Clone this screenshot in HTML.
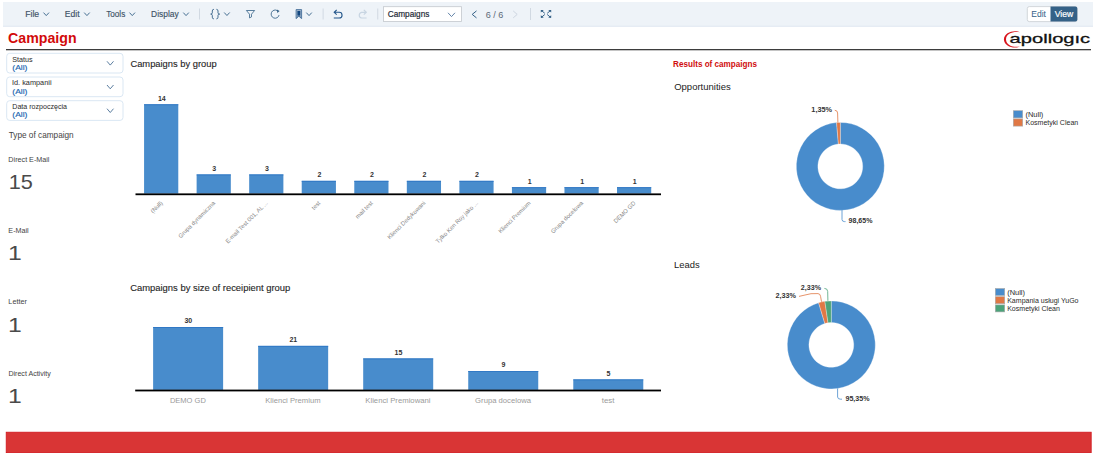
<!DOCTYPE html><html><head><meta charset="utf-8"><style>html,body{margin:0;padding:0;background:#fff;overflow:hidden;width:1100px;height:456px}svg{display:block;font-family:"Liberation Sans",sans-serif}</style></head><body>
<svg width="1100" height="456" viewBox="0 0 1100 456">
<rect x="3" y="2" width="1090" height="24.6" fill="#eef3f8"/>
<rect x="3" y="25.8" width="1090" height="0.8" fill="#dde5ee"/>
<text x="25.18" y="17" font-size="9" fill="#3d5266" font-weight="400" textLength="14.01" lengthAdjust="spacingAndGlyphs" stroke="#3d5266" stroke-width="0.15">File</text>
<polyline points="43.5,12.6 46.25,15.6 49.0,12.6" fill="none" stroke="#346187" stroke-width="0.9"/>
<text x="64.78" y="17" font-size="9" fill="#3d5266" font-weight="400" textLength="14.83" lengthAdjust="spacingAndGlyphs" stroke="#3d5266" stroke-width="0.15">Edit</text>
<polyline points="84.2,12.6 86.95,15.6 89.7,12.6" fill="none" stroke="#346187" stroke-width="0.9"/>
<text x="106.17" y="17" font-size="9" fill="#3d5266" font-weight="400" textLength="19.06" lengthAdjust="spacingAndGlyphs" stroke="#3d5266" stroke-width="0.15">Tools</text>
<polyline points="129.5,12.6 132.25,15.6 135.0,12.6" fill="none" stroke="#346187" stroke-width="0.9"/>
<text x="151.10" y="17" font-size="9" fill="#3d5266" font-weight="400" textLength="27.61" lengthAdjust="spacingAndGlyphs" stroke="#3d5266" stroke-width="0.15">Display</text>
<polyline points="183.3,12.6 186.05,15.6 188.8,12.6" fill="none" stroke="#346187" stroke-width="0.9"/>
<rect x="199.2" y="8.5" width="0.8" height="11" fill="#cad3dd"/>
<path d="M213.9,9.3 Q212.2,9.4 212.3,11 L212.3,12.9 Q212.3,14 210.7,14.1 Q212.3,14.2 212.3,15.3 L212.3,17.2 Q212.2,18.8 213.9,18.9" fill="none" stroke="#346187" stroke-width="0.9"/>
<path d="M216.4,9.3 Q218.1,9.4 218,11 L218,12.9 Q218,14 219.7,14.1 Q218,14.2 218,15.3 L218,17.2 Q218.1,18.8 216.4,18.9" fill="none" stroke="#346187" stroke-width="0.9"/>
<polyline points="224.2,12.5 226.95,15.5 229.7,12.5" fill="none" stroke="#346187" stroke-width="0.9"/>
<path d="M246.4,10.5 L254.6,10.5 L251.5,14.2 L251.5,16.9 L249.5,17.9 L249.5,14.2 Z" fill="none" stroke="#346187" stroke-width="0.8" stroke-linejoin="round"/>
<path d="M277.2,10.6 A4,4.1 0 1 0 279.05,15.1" fill="none" stroke="#346187" stroke-width="0.85"/>
<path d="M276.9,9.4 L279.6,11.1 L277.3,12.9 Z" fill="#346187"/>
<path d="M296.1,9.6 L301.6,9.6 L301.6,18.6 L298.85,16.2 L296.1,18.6 Z" fill="#9fb4ca" stroke="#3f6a96" stroke-width="0.85"/>
<rect x="297.4" y="11" width="2.9" height="4.6" fill="#124780"/>
<path d="M296.6,17.6 L298.85,15.6 L301.1,17.6" fill="none" stroke="#3f6a96" stroke-width="0.7"/>
<polyline points="306.3,12.6 309.05,15.6 311.8,12.6" fill="none" stroke="#346187" stroke-width="0.9"/>
<rect x="322.7" y="8.5" width="0.8" height="11" fill="#cad3dd"/>
<path d="M336.7,9.9 L334.2,12.3 L336.7,14.6 M334.3,12.3 L339.2,12.3 A2.85,2.85 0 0 1 339.2,18 L333.8,18" fill="none" stroke="#23568a" stroke-width="1.1"/>
<path d="M363.8,9.9 L366.3,12.3 L363.8,14.6 M366.2,12.3 L361.6,12.3 A2.9,2.9 0 0 0 361.6,18 L366.6,18" fill="none" stroke="#c8d5e2" stroke-width="1.2"/>
<rect x="377.4" y="8.5" width="0.8" height="11" fill="#cad3dd"/>
<rect x="383.5" y="6.7" width="78" height="14.8" fill="#fff" stroke="#c2c7cc" stroke-width="0.8"/>
<text x="387.72" y="17.3" font-size="8.6" fill="#1f2b38" font-weight="400" textLength="41.61" lengthAdjust="spacingAndGlyphs" stroke="#1f2b38" stroke-width="0.2">Campaigns</text>
<polyline points="448,12.8 451.5,16.6 455,12.8" fill="none" stroke="#5477a0" stroke-width="0.9"/>
<polyline points="476.5,10.9 472.2,14.4 476.5,17.9" fill="none" stroke="#346187" stroke-width="1"/>
<text x="485.75" y="17.5" font-size="8.3" fill="#5d6a77" font-weight="400" textLength="17.68" lengthAdjust="spacingAndGlyphs" >6 / 6</text>
<polyline points="513.2,10.9 517.2,14.4 513.2,17.9" fill="none" stroke="#c9d3de" stroke-width="0.9"/>
<rect x="530" y="8" width="0.8" height="12" fill="#cad3dd"/>
<path d="M541.2,10.3 L544.8,13.3 M541.2,17.5 L544.8,14.5 M550.8,10.3 L547.2,13.3 M550.8,17.5 L547.2,14.5" stroke="#346187" stroke-width="1"/>
<path d="M540.8,10 L543.8,10 L540.8,12.6 Z M540.8,17.8 L543.8,17.8 L540.8,15.2 Z M551.2,10 L548.2,10 L551.2,12.6 Z M551.2,17.8 L548.2,17.8 L551.2,15.2 Z" fill="#346187"/>
<rect x="1027.3" y="6.6" width="50" height="15" rx="2" fill="#fff" stroke="#c8cdd2" stroke-width="0.8"/>
<path d="M1050.5,6.6 L1075.3,6.6 A2,2 0 0 1 1077.3,8.6 L1077.3,19.6 A2,2 0 0 1 1075.3,21.6 L1050.5,21.6 Z" fill="#346187"/>
<text x="1031.29" y="17.4" font-size="9" fill="#346187" font-weight="400" textLength="14.72" lengthAdjust="spacingAndGlyphs" >Edit</text>
<text x="1054.80" y="17.4" font-size="9" fill="#ffffff" font-weight="400" textLength="18.45" lengthAdjust="spacingAndGlyphs" stroke="#fff" stroke-width="0.2">View</text>
<text x="8.09" y="43.2" font-size="14" fill="#d20a0a" font-weight="700" textLength="68.54" lengthAdjust="spacingAndGlyphs" >Campaign</text>
<path d="M1019.8,32.3 C1014,29.6 1004.2,32.5 1003.9,39.4 C1004.2,46.3 1014,49.2 1019.8,46.5 C1013.5,47.6 1006.2,45.5 1006,39.4 C1006.2,33.3 1013.5,31.2 1019.8,32.3 Z" fill="#d8141c"/>
<text x="1009.64" y="43.3" font-size="13.3" fill="#111" font-weight="400" textLength="80.58" lengthAdjust="spacingAndGlyphs" stroke="#111" stroke-width="0.3">apollogıc</text>
<rect x="6" y="49" width="1085" height="1.3" fill="#3d3d3d"/>
<rect x="6.7" y="53.3" width="116.3" height="19.7" rx="3" fill="#fff" stroke="#d6e4f2" stroke-width="0.9"/>
<text x="12.29" y="61.5" font-size="7" fill="#2a2a2a" font-weight="400" textLength="20.41" lengthAdjust="spacingAndGlyphs" >Status</text>
<text x="12.32" y="69.9" font-size="7.4" fill="#2066b0" font-weight="400" textLength="15.14" lengthAdjust="spacingAndGlyphs" stroke="#2066b0" stroke-width="0.15">(All)</text>
<polyline points="107,61.3 110.25,65.1 113.5,61.3" fill="none" stroke="#4a6f95" stroke-width="0.9"/>
<rect x="6.7" y="77.0" width="116.3" height="19.7" rx="3" fill="#fff" stroke="#d6e4f2" stroke-width="0.9"/>
<text x="12.02" y="85.2" font-size="7" fill="#2a2a2a" font-weight="400" textLength="39.50" lengthAdjust="spacingAndGlyphs" >Id. kampanii</text>
<text x="12.32" y="93.6" font-size="7.4" fill="#2066b0" font-weight="400" textLength="15.14" lengthAdjust="spacingAndGlyphs" stroke="#2066b0" stroke-width="0.15">(All)</text>
<polyline points="107,85.0 110.25,88.8 113.5,85.0" fill="none" stroke="#4a6f95" stroke-width="0.9"/>
<rect x="6.7" y="100.69999999999999" width="116.3" height="19.7" rx="3" fill="#fff" stroke="#d6e4f2" stroke-width="0.9"/>
<text x="12.29" y="108.89999999999999" font-size="7" fill="#2a2a2a" font-weight="400" textLength="54.79" lengthAdjust="spacingAndGlyphs" >Data rozpoczęcia</text>
<text x="12.32" y="117.29999999999998" font-size="7.4" fill="#2066b0" font-weight="400" textLength="15.14" lengthAdjust="spacingAndGlyphs" stroke="#2066b0" stroke-width="0.15">(All)</text>
<polyline points="107,108.69999999999999 110.25,112.49999999999999 113.5,108.69999999999999" fill="none" stroke="#4a6f95" stroke-width="0.9"/>
<text x="8.75" y="137.8" font-size="8.4" fill="#444" font-weight="400" textLength="64.95" lengthAdjust="spacingAndGlyphs" >Type of campaign</text>
<text x="8.39" y="162" font-size="7" fill="#444" font-weight="400" textLength="41.09" lengthAdjust="spacingAndGlyphs" >Direct E-Mail</text>
<text x="8.65" y="188.8" font-size="21" fill="#4a4a4a" font-weight="400" textLength="24.14" lengthAdjust="spacingAndGlyphs" >15</text>
<text x="8.39" y="232.8" font-size="7" fill="#444" font-weight="400" textLength="20.31" lengthAdjust="spacingAndGlyphs" >E-Mail</text>
<text x="8.13" y="260.4" font-size="21" fill="#4a4a4a" font-weight="400" textLength="13.76" lengthAdjust="spacingAndGlyphs" >1</text>
<text x="8.38" y="304" font-size="7" fill="#444" font-weight="400" textLength="18.58" lengthAdjust="spacingAndGlyphs" >Letter</text>
<text x="8.13" y="331.7" font-size="21" fill="#4a4a4a" font-weight="400" textLength="13.76" lengthAdjust="spacingAndGlyphs" >1</text>
<text x="8.40" y="375.5" font-size="7" fill="#444" font-weight="400" textLength="42.41" lengthAdjust="spacingAndGlyphs" >Direct Activity</text>
<text x="8.13" y="402.79999999999995" font-size="21" fill="#4a4a4a" font-weight="400" textLength="13.76" lengthAdjust="spacingAndGlyphs" >1</text>
<text x="130.40" y="66.6" font-size="9.3" fill="#262626" font-weight="400" textLength="86.29" lengthAdjust="spacingAndGlyphs" stroke="#262626" stroke-width="0.12">Campaigns by group</text>
<rect x="144.08" y="104.30" width="34.2" height="89.30" fill="#488ccc"/>
<rect x="144.08" y="104.30" width="34.2" height="0.9" fill="#2e76c4"/>
<text x="161.78" y="100.70" font-size="7" fill="#333" font-weight="700" text-anchor="middle" >14</text>
<text x="163.08" y="203.50" font-size="5.9" fill="#888" text-anchor="end" transform="rotate(-45 163.08 203.50)">(Null)</text>
<rect x="196.62" y="174.46" width="34.2" height="19.14" fill="#488ccc"/>
<rect x="196.62" y="174.46" width="34.2" height="0.9" fill="#2e76c4"/>
<text x="214.32" y="170.86" font-size="7" fill="#333" font-weight="700" text-anchor="middle" >3</text>
<text x="215.62" y="203.50" font-size="5.9" fill="#888" text-anchor="end" transform="rotate(-45 215.62 203.50)">Grupa dynamiczna</text>
<rect x="249.18" y="174.46" width="34.2" height="19.14" fill="#488ccc"/>
<rect x="249.18" y="174.46" width="34.2" height="0.9" fill="#2e76c4"/>
<text x="266.88" y="170.86" font-size="7" fill="#333" font-weight="700" text-anchor="middle" >3</text>
<text x="268.18" y="203.50" font-size="5.9" fill="#888" text-anchor="end" transform="rotate(-45 268.18 203.50)">E-mail Test 001, AL ...</text>
<rect x="301.72" y="180.84" width="34.2" height="12.76" fill="#488ccc"/>
<rect x="301.72" y="180.84" width="34.2" height="0.9" fill="#2e76c4"/>
<text x="319.42" y="177.24" font-size="7" fill="#333" font-weight="700" text-anchor="middle" >2</text>
<text x="320.72" y="203.50" font-size="5.9" fill="#888" text-anchor="end" transform="rotate(-45 320.72 203.50)">test</text>
<rect x="354.28" y="180.84" width="34.2" height="12.76" fill="#488ccc"/>
<rect x="354.28" y="180.84" width="34.2" height="0.9" fill="#2e76c4"/>
<text x="371.98" y="177.24" font-size="7" fill="#333" font-weight="700" text-anchor="middle" >2</text>
<text x="373.28" y="203.50" font-size="5.9" fill="#888" text-anchor="end" transform="rotate(-45 373.28 203.50)">mail test</text>
<rect x="406.82" y="180.84" width="34.2" height="12.76" fill="#488ccc"/>
<rect x="406.82" y="180.84" width="34.2" height="0.9" fill="#2e76c4"/>
<text x="424.52" y="177.24" font-size="7" fill="#333" font-weight="700" text-anchor="middle" >2</text>
<text x="425.82" y="203.50" font-size="5.9" fill="#888" text-anchor="end" transform="rotate(-45 425.82 203.50)">Klienci Dedykowani</text>
<rect x="459.38" y="180.84" width="34.2" height="12.76" fill="#488ccc"/>
<rect x="459.38" y="180.84" width="34.2" height="0.9" fill="#2e76c4"/>
<text x="477.07" y="177.24" font-size="7" fill="#333" font-weight="700" text-anchor="middle" >2</text>
<text x="478.38" y="203.50" font-size="5.9" fill="#888" text-anchor="end" transform="rotate(-45 478.38 203.50)">Tylko Ken Roy jako ...</text>
<rect x="511.93" y="187.22" width="34.2" height="6.38" fill="#488ccc"/>
<rect x="511.93" y="187.22" width="34.2" height="0.9" fill="#2e76c4"/>
<text x="529.62" y="183.62" font-size="7" fill="#333" font-weight="700" text-anchor="middle" >1</text>
<text x="530.92" y="203.50" font-size="5.9" fill="#888" text-anchor="end" transform="rotate(-45 530.92 203.50)">Klienci Premium</text>
<rect x="564.47" y="187.22" width="34.2" height="6.38" fill="#488ccc"/>
<rect x="564.47" y="187.22" width="34.2" height="0.9" fill="#2e76c4"/>
<text x="582.17" y="183.62" font-size="7" fill="#333" font-weight="700" text-anchor="middle" >1</text>
<text x="583.47" y="203.50" font-size="5.9" fill="#888" text-anchor="end" transform="rotate(-45 583.47 203.50)">Grupa docelowa</text>
<rect x="617.02" y="187.22" width="34.2" height="6.38" fill="#488ccc"/>
<rect x="617.02" y="187.22" width="34.2" height="0.9" fill="#2e76c4"/>
<text x="634.72" y="183.62" font-size="7" fill="#333" font-weight="700" text-anchor="middle" >1</text>
<text x="636.02" y="203.50" font-size="5.9" fill="#888" text-anchor="end" transform="rotate(-45 636.02 203.50)">DEMO GD</text>
<rect x="135.5" y="193.4" width="525.5" height="1.8" fill="#000"/>
<text x="130.19" y="291.4" font-size="9.3" fill="#262626" font-weight="400" textLength="160.10" lengthAdjust="spacingAndGlyphs" stroke="#262626" stroke-width="0.12">Campaigns by size of receipient group</text>
<rect x="153.12" y="327.00" width="70" height="62.90" fill="#488ccc"/>
<rect x="153.12" y="327.00" width="70" height="0.9" fill="#2e76c4"/>
<text x="188.32" y="323.20" font-size="7" fill="#333" font-weight="700" text-anchor="middle" >30</text>
<text x="169.89" y="403.1" font-size="8" fill="#9a9a9a" font-weight="400" textLength="35.95" lengthAdjust="spacingAndGlyphs" >DEMO GD</text>
<rect x="258.16" y="345.87" width="70" height="44.03" fill="#488ccc"/>
<rect x="258.16" y="345.87" width="70" height="0.9" fill="#2e76c4"/>
<text x="293.36" y="342.07" font-size="7" fill="#333" font-weight="700" text-anchor="middle" >21</text>
<text x="265.28" y="403.1" font-size="8" fill="#9a9a9a" font-weight="400" textLength="55.24" lengthAdjust="spacingAndGlyphs" >Klienci Premium</text>
<rect x="363.20" y="358.45" width="70" height="31.45" fill="#488ccc"/>
<rect x="363.20" y="358.45" width="70" height="0.9" fill="#2e76c4"/>
<text x="398.40" y="354.65" font-size="7" fill="#333" font-weight="700" text-anchor="middle" >15</text>
<text x="365.28" y="403.1" font-size="8" fill="#9a9a9a" font-weight="400" textLength="65.29" lengthAdjust="spacingAndGlyphs" >Klienci Premiowani</text>
<rect x="468.24" y="371.03" width="70" height="18.87" fill="#488ccc"/>
<rect x="468.24" y="371.03" width="70" height="0.9" fill="#2e76c4"/>
<text x="503.44" y="367.23" font-size="7" fill="#333" font-weight="700" text-anchor="middle" >9</text>
<text x="475.12" y="403.1" font-size="8" fill="#9a9a9a" font-weight="400" textLength="55.89" lengthAdjust="spacingAndGlyphs" >Grupa docelowa</text>
<rect x="573.28" y="379.42" width="70" height="10.48" fill="#488ccc"/>
<rect x="573.28" y="379.42" width="70" height="0.9" fill="#2e76c4"/>
<text x="608.48" y="375.62" font-size="7" fill="#333" font-weight="700" text-anchor="middle" >5</text>
<text x="601.75" y="403.1" font-size="8" fill="#9a9a9a" font-weight="400" textLength="12.79" lengthAdjust="spacingAndGlyphs" >test</text>
<rect x="135.2" y="389.6" width="525.8" height="1.8" fill="#000"/>
<text x="673.12" y="66.5" font-size="8.5" fill="#d00d0d" font-weight="700" textLength="83.82" lengthAdjust="spacingAndGlyphs" >Results of campaigns</text>
<text x="674.19" y="89.7" font-size="9.4" fill="#222" font-weight="400" textLength="56.49" lengthAdjust="spacingAndGlyphs" >Opportunities</text>
<text x="674.05" y="267.8" font-size="9.4" fill="#222" font-weight="400" textLength="25.60" lengthAdjust="spacingAndGlyphs" >Leads</text>
<path d="M840.30,122.40 A44,44 0 1 1 836.57,122.56 L838.40,144.08 A22.4,22.4 0 1 0 840.30,144.00 Z" fill="#488ccc" stroke="#fff" stroke-width="0.3"/>
<path d="M836.57,122.56 A44,44 0 0 1 840.30,122.40 L840.30,144.00 A22.4,22.4 0 0 0 838.40,144.08 Z" fill="#e07845" stroke="#fff" stroke-width="0.3"/>
<path d="M834.8,110.3 Q837.5,110.3 837.6,113 L837.9,122.6" fill="none" stroke="#e07845" stroke-width="0.8"/>
<text x="811.38" y="111.8" font-size="7" fill="#333" font-weight="700" textLength="20.73" lengthAdjust="spacingAndGlyphs" >1,35%</text>
<path d="M842,210 L842,219.5 Q842,221.6 844.5,221.6 L845.5,221.6" fill="none" stroke="#488ccc" stroke-width="0.8"/>
<text x="848.55" y="223" font-size="7" fill="#333" font-weight="700" textLength="23.90" lengthAdjust="spacingAndGlyphs" >98,65%</text>
<rect x="1013.3" y="110.7" width="9.4" height="7.2" fill="#488ccc" stroke="#a9a9a9" stroke-width="0.6"/>
<rect x="1013.3" y="118.9" width="9.4" height="7.2" fill="#e07845" stroke="#a9a9a9" stroke-width="0.6"/>
<text x="1025.47" y="116.8" font-size="7" fill="#2b2b2b" font-weight="400" textLength="17.84" lengthAdjust="spacingAndGlyphs" >(Null)</text>
<text x="1025.50" y="124.8" font-size="7" fill="#2b2b2b" font-weight="400" textLength="52.73" lengthAdjust="spacingAndGlyphs" >Kosmetyki Clean</text>
<path d="M831.30,300.90 A44,44 0 1 1 818.58,302.78 L824.83,323.46 A22.4,22.4 0 1 0 831.30,322.50 Z" fill="#488ccc" stroke="#fff" stroke-width="0.3"/>
<path d="M818.58,302.78 A44,44 0 0 1 824.87,301.37 L828.03,322.74 A22.4,22.4 0 0 0 824.83,323.46 Z" fill="#e07845" stroke="#fff" stroke-width="0.3"/>
<path d="M824.87,301.37 A44,44 0 0 1 831.30,300.90 L831.30,322.50 A22.4,22.4 0 0 0 828.03,322.74 Z" fill="#4ca37a" stroke="#fff" stroke-width="0.3"/>
<path d="M824.4,288.4 Q827.6,288.4 827.7,291.5 L827.9,300.8" fill="none" stroke="#4ca37a" stroke-width="0.8"/>
<text x="800.85" y="289.8" font-size="7" fill="#333" font-weight="700" textLength="20.16" lengthAdjust="spacingAndGlyphs" >2,33%</text>
<path d="M799,296.4 Q805,295 811,293.7 L818,293.6 Q820.4,293.8 820.6,296.5 L821.5,301.7" fill="none" stroke="#e07845" stroke-width="0.8"/>
<text x="775.44" y="298" font-size="7" fill="#333" font-weight="700" textLength="20.56" lengthAdjust="spacingAndGlyphs" >2,33%</text>
<path d="M837.6,388.5 L837.6,397 Q837.8,399.2 840.5,399.2 L842,399.2" fill="none" stroke="#488ccc" stroke-width="0.8"/>
<text x="845.45" y="400.7" font-size="7" fill="#333" font-weight="700" textLength="24.10" lengthAdjust="spacingAndGlyphs" >95,35%</text>
<rect x="995.3" y="288.5" width="9.4" height="7" fill="#488ccc" stroke="#a9a9a9" stroke-width="0.6"/>
<rect x="995.3" y="296.7" width="9.4" height="7" fill="#e07845" stroke="#a9a9a9" stroke-width="0.6"/>
<rect x="995.3" y="304.9" width="9.4" height="7" fill="#4ca37a" stroke="#a9a9a9" stroke-width="0.6"/>
<text x="1007.17" y="294.8" font-size="7" fill="#2b2b2b" font-weight="400" textLength="17.84" lengthAdjust="spacingAndGlyphs" >(Null)</text>
<text x="1007.20" y="302.6" font-size="7" fill="#2b2b2b" font-weight="400" textLength="71.34" lengthAdjust="spacingAndGlyphs" >Kampania usługi YuGo</text>
<text x="1007.20" y="310.7" font-size="7" fill="#2b2b2b" font-weight="400" textLength="52.73" lengthAdjust="spacingAndGlyphs" >Kosmetyki Clean</text>
<rect x="6.2" y="432.2" width="1085" height="20.4" fill="#d93535" stroke="#d0151b" stroke-width="0.8"/>
</svg></body></html>
